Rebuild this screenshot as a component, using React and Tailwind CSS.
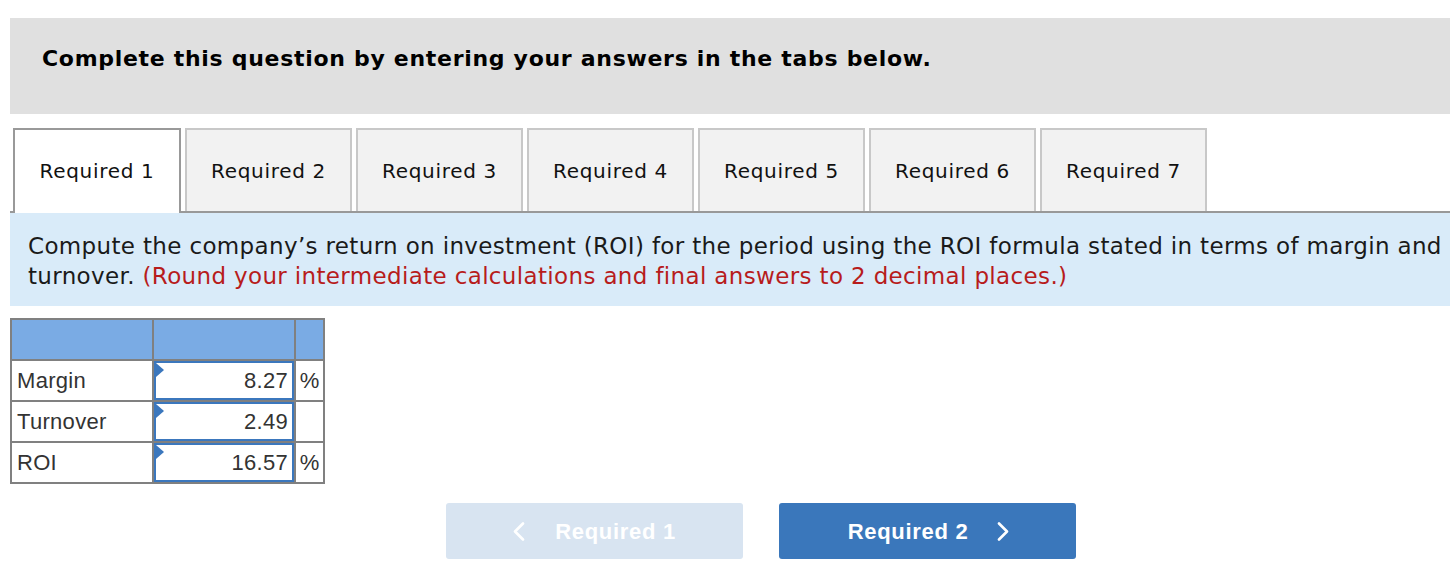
import React from "react";

const tabs = ["Required 1", "Required 2", "Required 3", "Required 4", "Required 5", "Required 6", "Required 7"];

const rows = [
  { label: "Margin", value: "8.27", unit: "%" },
  { label: "Turnover", value: "2.49", unit: "" },
  { label: "ROI", value: "16.57", unit: "%" },
];

const Chevron = ({ dir }) => (
  <svg width="12" height="19" viewBox="0 0 12 19" fill="none" stroke="currentColor" strokeWidth="2.6" strokeLinecap="round" strokeLinejoin="round">
    {dir === "left" ? <path d="M10 1.5 L2 9.5 L10 17.5" /> : <path d="M2 1.5 L10 9.5 L2 17.5" />}
  </svg>
);

const App = () => {
  return (
    <div className="bg-white min-h-[567px] pt-[18px] pl-[10px] font-['DejaVu_Sans',sans-serif] text-[#111]">
      {/* Header */}
      <div className="bg-[#e0e0e0] h-[96px] pt-[29px] pl-[32px]">
        <h2 className="text-[22px] leading-[24px] font-bold tracking-[0.7px] text-black">
          Complete this question by entering your answers in the tabs below.
        </h2>
      </div>

      {/* Tabs */}
      <div className="mt-[14px] flex items-end border-b-2 border-[#999] h-[85px]">
        {tabs.map((t, i) =>
          i === 0 ? (
            <div
              key={t}
              className="ml-[3px] w-[168px] h-[85px] -mb-[2px] bg-white border-t-2 border-x-2 border-[#999] flex items-center justify-center text-[20px] tracking-[0.7px] text-[#111] pb-[2px]"
            >
              {t}
            </div>
          ) : (
            <div
              key={t}
              className="ml-[4px] w-[167px] h-[83px] bg-[#f2f2f2] border-2 border-b-0 border-[#c8c8c8] flex items-center justify-center text-[20px] tracking-[0.7px] text-[#111]"
            >
              {t}
            </div>
          )
        )}
      </div>

      {/* Instructions */}
      <div className="bg-[#d9ebf9] h-[93px] pt-[18px] pl-[18px] text-[23px] leading-[30px] tracking-[0.35px] text-[#1a1a1a]">
        Compute the company’s return on investment (ROI) for the period using the ROI formula stated in terms of margin and turnover.{" "}
        <span className="text-[#b71c1c]">(Round your intermediate calculations and final answers to 2 decimal places.)</span>
      </div>

      {/* Table */}
      <table className="mt-[12px] border-collapse font-['Liberation_Sans',Arial,sans-serif] text-[22px] tracking-[0.3px] text-[#333]">
        <tbody>
          <tr className="h-[41px] bg-[#7aabe4]">
            <td className="w-[142px] border-2 border-[#808080]"></td>
            <td className="w-[142px] border-2 border-[#808080]"></td>
            <td className="w-[29px] border-2 border-[#808080]"></td>
          </tr>
          {rows.map((r) => (
            <tr key={r.label} className="h-[41px]">
              <td className="border-2 border-[#808080] pl-[5px]">{r.label}</td>
              <td className="border-2 border-[#808080] p-0">
                <div className="relative h-[39px] border-2 border-[#3b77bd] flex items-center justify-end pr-[4px]">
                  <span className="absolute left-0 top-0 w-0 h-0 border-t-[7px] border-b-[7px] border-l-[8px] border-t-transparent border-b-transparent border-l-[#3b77bd]"></span>
                  {r.value}
                </div>
              </td>
              <td className="border-2 border-[#808080] text-center tracking-normal">{r.unit}</td>
            </tr>
          ))}
        </tbody>
      </table>

      {/* Nav buttons */}
      <div className="mt-[19px] ml-[436px] flex gap-[36px] font-['Liberation_Sans',Arial,sans-serif] text-[22px] tracking-[0.7px] font-bold text-white">
        <button className="w-[297px] h-[56px] rounded-[3px] bg-[#d8e4f1] flex items-center justify-center gap-[30px]">
          <Chevron dir="left" />
          <span>Required 1</span>
        </button>
        <button className="w-[297px] h-[56px] rounded-[3px] bg-[#3a77bb] flex items-center justify-center gap-[29px] pl-[2px]">
          <span>Required 2</span>
          <Chevron dir="right" />
        </button>
      </div>
    </div>
  );
};

export default App;
